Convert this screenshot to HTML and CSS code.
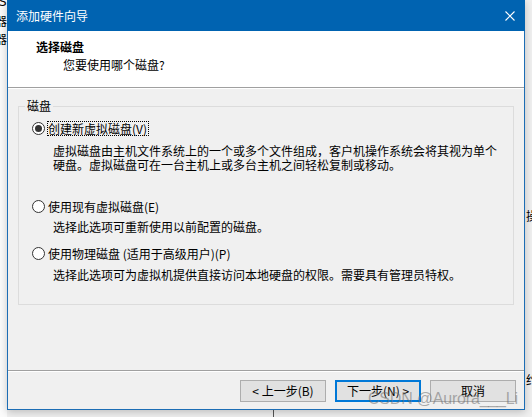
FILE: index.html
```html
<!DOCTYPE html>
<html lang="zh-CN">
<head>
<meta charset="utf-8">
<title>添加硬件向导</title>
<link rel="stylesheet" href="styles.css">
</head>
<body>
<div class="desk">
  <span class="dk dk-s">S</span>
  <span class="dk dk-q1">器</span>
  <span class="dk dk-q2">器</span>
  <span class="dk dk-cao">操</span>
  <span class="dk dk-yue">约</span>
  <span class="dk-line"></span>
</div>

<div class="window">
  <div class="titlebar">
    <span class="title">添加硬件向导</span>
    <svg class="close" width="10" height="10" viewBox="0 0 10 10"><path d="M0.5 0.5L9.5 9.5M9.5 0.5L0.5 9.5" stroke="#fff" stroke-width="1.1" fill="none"/></svg>
  </div>

  <div class="header">
    <div class="h-title">选择磁盘</div>
    <div class="h-sub">您要使用哪个磁盘?</div>
  </div>

  <div class="body">
    <fieldset class="group">
      <legend>磁盘</legend>
      <div class="group-inner">
        <div class="opt opt1">
          <div class="row"><span class="radio checked"></span><span class="label focus">创建新虚拟磁盘(V)</span></div>
          <div class="desc">虚拟磁盘由主机文件系统上的一个或多个文件组成，客户机操作系统会将其视为单个<br>硬盘。虚拟磁盘可在一台主机上或多台主机之间轻松复制或移动。</div>
        </div>
        <div class="opt opt2">
          <div class="row"><span class="radio"></span><span class="label">使用现有虚拟磁盘(E)</span></div>
          <div class="desc">选择此选项可重新使用以前配置的磁盘。</div>
        </div>
        <div class="opt opt3">
          <div class="row"><span class="radio"></span><span class="label">使用物理磁盘 (适用于高级用户)(P)</span></div>
          <div class="desc">选择此选项可为虚拟机提供直接访问本地硬盘的权限。需要具有管理员特权。</div>
        </div>
      </div>
    </fieldset>
  </div>

  <div class="footer">
    <button class="btn">&lt; 上一步(B)</button>
    <button class="btn btn-focus">下一步(N) &gt;</button>
    <button class="btn">取消</button>
  </div>
</div>

<div class="watermark">CSDN @Aurora___Li</div>
</body>
</html>
```

FILE: styles.css
```css
html, body {
  margin: 0;
  padding: 0;
}
body {
  width: 532px;
  height: 417px;
  overflow: hidden;
  position: relative;
  background: #f0f0f0;
  font-family: "Noto Sans CJK SC", "Microsoft YaHei", sans-serif;
  font-size: 12px;
  color: #000;
}

/* background desktop fragments */
.desk {
  position: absolute;
  left: 0;
  top: 0;
  width: 532px;
  height: 417px;
}
.desk::before {
  content: "";
  position: absolute;
  left: 0;
  top: 0;
  width: 7px;
  height: 417px;
  background: #fbfbfb;
}
.dk {
  position: absolute;
  font-size: 12px;
  line-height: 14px;
  color: #000;
}
.dk-s { left: -1px; top: -5px; font-family: "DejaVu Sans", sans-serif; font-size: 12px; }
.dk-q1 { left: -5px; top: 14px; }
.dk-q2 { left: -5px; top: 32px; }
.dk-cao { left: 526px; top: 209px; }
.dk-yue { left: 526px; top: 373px; }
.dk-line {
  position: absolute;
  left: 273px;
  top: 408px;
  width: 1px;
  height: 9px;
  background: #555;
}

/* dialog window */
.window {
  position: relative;
  z-index: 1;
  margin-left: 7px;
  width: 518px;
  height: 410px;
  box-sizing: border-box;
  border: 1px solid #1c6db5;
  border-top: none;
  background: #f0f0f0;
  display: flex;
  flex-direction: column;
  box-shadow: 0 2px 8px rgba(0, 0, 0, 0.22);
}

.titlebar {
  height: 31px;
  flex: none;
  background: #0063b1;
  color: #fff;
  display: flex;
  align-items: center;
  justify-content: space-between;
  padding: 0 9px 0 8px;
  margin: 0 -1px;
  padding-left: 9px;
  padding-right: 10px;
}
.title {
  font-size: 12px;
  line-height: 14px;
  margin-top: 1px;
}
.close {
  display: block;
}

.header {
  height: 56px;
  flex: none;
  background: #fff;
  border-bottom: 1px solid #a0a0a0;
  box-sizing: content-box;
  padding: 0;
}
.h-title {
  font-weight: bold;
  line-height: 14px;
  padding: 9px 0 0 28px;
}
.h-sub {
  line-height: 14px;
  padding: 4px 0 0 55px;
}

.body {
  flex: 1;
  border-top: 1px solid #fff;
  border-bottom: 1px solid #a0a0a0;
  overflow: hidden;
}

.group {
  margin: 10px 10px 0 10px;
  padding: 0;
  height: 206px;
  box-sizing: border-box;
  border: 1px solid #dcdcdc;
  min-width: 0;
}
.group legend {
  margin-left: 6px;
  padding: 0 2px;
  line-height: 14px;
  font-size: 12px;
}
.group-inner {
  padding: 8px 0 0 13px;
}

.row {
  display: flex;
  align-items: center;
  height: 15px;
}
.radio {
  width: 13px;
  height: 13px;
  box-sizing: border-box;
  border: 1px solid #333;
  border-radius: 50%;
  background: #fff;
  flex: none;
  position: relative;
}
.radio.checked::after {
  content: "";
  position: absolute;
  left: 2px;
  top: 2px;
  width: 7px;
  height: 7px;
  border-radius: 50%;
  background: #333;
}
.label {
  margin-left: 2px;
  line-height: 13px;
  border: 1px dotted transparent;
  padding: 0 1px 0 0;
  white-space: nowrap;
}
.label.focus {
  border-color: #000;
}

.desc {
  margin-top: 8px;
  margin-left: 21px;
  line-height: 14px;
  white-space: nowrap;
}
.opt2 .row { margin-top: 27px; }
.opt2 .desc { margin-top: 6px; }
.opt3 .row { margin-top: 12px; }
.opt3 .desc { margin-top: 7px; }

.footer {
  flex: none;
  height: 38px;
  box-sizing: border-box;
  border-top: 1px solid #fff;
  padding: 8px 8px 0 0;
  display: flex;
  justify-content: flex-end;
  gap: 9px;
}
.btn {
  width: 86px;
  height: 22px;
  box-sizing: border-box;
  padding: 0;
  margin: 0;
  background: #e1e1e1;
  border: 1px solid #adadad;
  font-family: "Noto Sans CJK SC", "Microsoft YaHei", sans-serif;
  font-size: 12px;
  line-height: 14px;
  color: #000;
}
.btn-focus {
  border: 2px solid #0078d7;
}

.watermark {
  position: absolute;
  z-index: 2;
  left: 368px;
  top: 390px;
  font-family: "Liberation Sans", Arial, sans-serif;
  font-size: 16px;
  line-height: 18px;
  letter-spacing: -0.2px;
  color: rgba(110, 110, 110, 0.55);
  white-space: nowrap;
}
```
